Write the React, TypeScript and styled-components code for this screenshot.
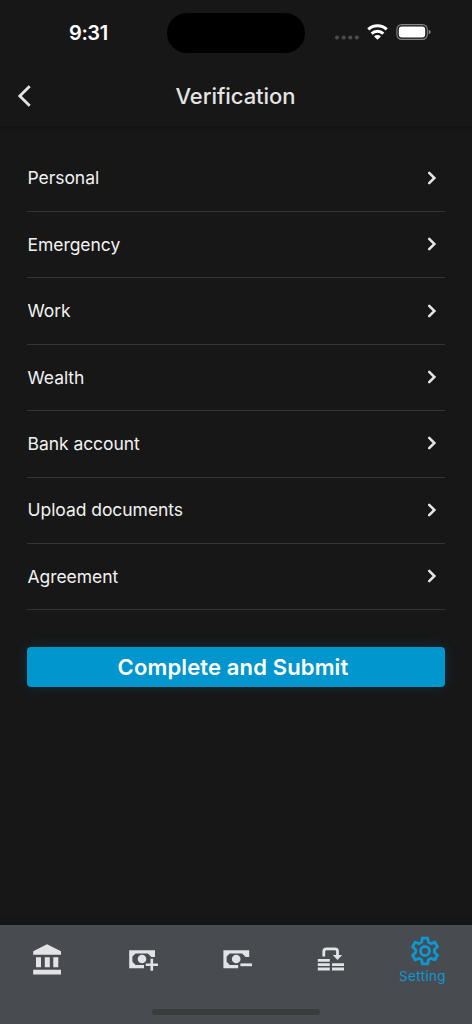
import React from 'react';
import styled, { createGlobalStyle } from 'styled-components';

const Global = createGlobalStyle`
  * { box-sizing: border-box; }
  body { margin: 0; background: #171717; }
`;

const Screen = styled.div`
  width: 472px;
  height: 1024px;
  display: flex;
  flex-direction: column;
  background: #171717;
  color: #f2f2f2;
  font-family: Inter, "Liberation Sans", sans-serif;
  overflow: hidden;
`;

const Top = styled.header`
  height: 126px;
  flex: none;
  box-shadow: 0 1px 5px rgba(0, 0, 0, 0.45);
`;

const StatusBar = styled.div`
  height: 66px;
  display: grid;
  grid-template-columns: 167px 138px 1fr;
  align-items: center;
`;

const Time = styled.div`
  padding: 0 0 1px 69px;
  font-size: 20px;
  font-weight: 600;
  letter-spacing: -0.4px;
  color: #fff;
`;

const Island = styled.div`
  height: 40px;
  border-radius: 20px;
  background: #000;
`;

const Indicators = styled.div`
  display: flex;
  align-items: center;
  padding: 0 0 2px 29px;
`;

const TitleBar = styled.div`
  height: 60px;
  display: grid;
  grid-template-columns: 60px 1fr 60px;
  align-items: center;
`;

const Back = styled.button`
  border: 0;
  background: none;
  padding: 0 0 0 16px;
  height: 24px;
  display: flex;
`;

const Title = styled.h1`
  margin: 0;
  padding-right: 1px;
  text-align: center;
  font-size: 22px;
  line-height: 28px;
  font-weight: 500;
  letter-spacing: -0.05px;
  color: #e4e4e4;
`;

const Main = styled.main`
  flex: 1;
  padding: 19.6px 27px 0;
`;

const List = styled.ul`
  list-style: none;
  margin: 0;
  padding: 0;
`;

const Row = styled.li`
  height: 66.4px;
  display: flex;
  align-items: center;
  justify-content: space-between;
  padding: 0 8px 0.8px 0.5px;
  border-bottom: 1px solid #343434;
  font-size: 17.5px;
  letter-spacing: -0.05px;
`;

const Submit = styled.button`
  display: block;
  width: 418px;
  height: 40px;
  margin-top: 36.6px;
  padding: 0 6px 0 0;
  border: 0;
  border-radius: 4px;
  background: #0296ce;
  box-shadow: 0 0 14px -1px rgba(2, 150, 206, 0.24);
  color: #fff;
  font: 600 22px/40px Inter, "Liberation Sans", sans-serif;
  letter-spacing: 0.14px;
`;

const Nav = styled.nav`
  height: 99px;
  flex: none;
  display: flex;
  flex-direction: column;
  align-items: center;
  justify-content: space-between;
  padding-bottom: 9px;
  background: #484c51;
  box-shadow: 0 -1px 8px rgba(0, 0, 0, 0.25);
`;

const Tabs = styled.div`
  width: 472px;
  height: 68px;
  display: grid;
  grid-template-columns: 94px 98px 92px 94px 94px;
`;

const Tab = styled.div<{ $active?: boolean }>`
  display: flex;
  flex-direction: column;
  align-items: center;
  justify-content: ${p => (p.$active ? 'flex-start' : 'center')};
  padding-top: ${p => (p.$active ? '10px' : '0')};
  color: ${p => (p.$active ? '#0d98d4' : '#e2e3e5')};
`;

const TabLabel = styled.span`
  margin-right: 5px;
  font-size: 13.5px;
  line-height: 18px;
  letter-spacing: 0.35px;
`;

const HomeIndicator = styled.div`
  width: 168px;
  height: 6px;
  border-radius: 3px;
  background: #3a3b3b;
`;

const items = ['Personal', 'Emergency', 'Work', 'Wealth', 'Bank account', 'Upload documents', 'Agreement'];

const Chevron = () => (
  <svg width="10" height="14" viewBox="0 0 10 14" fill="none" stroke="#e6e6e6" strokeWidth="2.5" strokeLinecap="round">
    <path d="M2.2 1.8 7.4 7 2.2 12.2" />
  </svg>
);

const StatusIcons = () => (
  <svg width="98" height="20" viewBox="334 22 98 20">
    <g fill="#4b4b4b">
      {[337, 343.7, 350.3, 356.8].map(x => <circle key={x} cx={x} cy="37.5" r="2.1" />)}
    </g>
    <g fill="none" stroke="#fff" strokeWidth="3">
      <path d="M368.3 29.4a13.3 13.3 0 0 1 18.4 0" />
      <path d="M371.7 33.6a8.3 8.3 0 0 1 11.6 0" />
    </g>
    <path d="M374.1 36.4a4.8 4.8 0 0 1 6.8 0l-3.4 3.4z" fill="#fff" />
    <rect x="396.9" y="24.6" width="30.4" height="14.8" rx="4.8" fill="none" stroke="#858585" strokeWidth="1.1" />
    <rect x="398.8" y="26.5" width="26.4" height="11" rx="3" fill="#fff" />
    <path d="M428.7 29.7q2 .6 2 2.3t-2 2.3z" fill="#858585" />
  </svg>
);

const BankIcon = () => (
  <svg width="28" height="31" viewBox="33 943 28 31" fill="currentColor">
    <path d="M47 943.3 61 950.3V953.7H33.2V950.3Z" />
    <path d="M36 956.3h5v10h-5zM44.8 956.3h5v10h-5zM53.3 956.3h5v10h-5zM33.2 968.7H61v4.8H33.2z" />
  </svg>
);

const Banknote = () => (
  <>
    <path d="M1.2 3.2H27v6.7h-3.6L20 6.4H7.6L4.4 9.6v5.2L7.6 18H16v3.2H1.2z" fill="currentColor" />
    <circle cx="14" cy="12" r="4.3" fill="currentColor" />
  </>
);

const CashPlusIcon = () => (
  <svg width="30" height="24" viewBox="0 0 30 24">
    <Banknote />
    <path d="M23.8 11.8v12M17.8 17.7H30" stroke="currentColor" strokeWidth="2.6" />
  </svg>
);

const CashMinusIcon = () => (
  <svg width="30" height="24" viewBox="0.8 0 30 24">
    <Banknote />
    <path d="M18.2 17.8H29.8" stroke="currentColor" strokeWidth="2.8" />
  </svg>
);

const TransferIcon = () => (
  <svg width="28" height="26" viewBox="317 946 28 26">
    <path d="M323.8 956.5v-5a2.7 2.7 0 0 1 2.7-2.7h8.3a2.7 2.7 0 0 1 2.7 2.7v4" fill="none" stroke="currentColor" strokeWidth="2.8" />
    <path d="M332.8 955h9.4l-4.7 4.9z" fill="currentColor" />
    <path d="M317.8 960.4h12M317.8 964.6h12M317.8 969h12M332 964.6h12M332 969h12" stroke="currentColor" strokeWidth="2.8" />
  </svg>
);

const GearIcon = () => (
  <svg width="30" height="32" viewBox="-15 -16 30 32" fill="none" stroke="currentColor" strokeWidth="2.8">
    <path d="M-2.6-12.8H2.6L3.4-8.9 6-7.4 9.8-8.8 12.4-4.2 9.4-1.5V1.5L12.4 4.2 9.8 8.8 6 7.4 3.4 8.9 2.6 12.8H-2.6L-3.4 8.9-6 7.4-9.8 8.8-12.4 4.2-9.4 1.5V-1.5L-12.4-4.2-9.8-8.8-6-7.4-3.4-8.9Z" />
    <circle r="4.5" />
  </svg>
);

export default function App() {
  return (
    <Screen>
      <Global />
      <Top>
        <StatusBar>
          <Time>9:31</Time>
          <Island />
          <Indicators><StatusIcons /></Indicators>
        </StatusBar>
        <TitleBar>
          <Back aria-label="Back">
            <svg width="18" height="24" viewBox="0 0 18 24" fill="none" stroke="#e4e4e4" strokeWidth="2.8">
              <path d="M13.7 2.2 3.8 12l9.9 9.8" />
            </svg>
          </Back>
          <Title>Verification</Title>
        </TitleBar>
      </Top>
      <Main>
        <List>
          {items.map(item => <Row key={item}><span>{item}</span><Chevron /></Row>)}
        </List>
        <Submit>Complete and Submit</Submit>
      </Main>
      <Nav>
        <Tabs>
          <Tab><BankIcon /></Tab>
          <Tab><CashPlusIcon /></Tab>
          <Tab><CashMinusIcon /></Tab>
          <Tab><TransferIcon /></Tab>
          <Tab $active><GearIcon /><TabLabel>Setting</TabLabel></Tab>
        </Tabs>
        <HomeIndicator />
      </Nav>
    </Screen>
  );
}
